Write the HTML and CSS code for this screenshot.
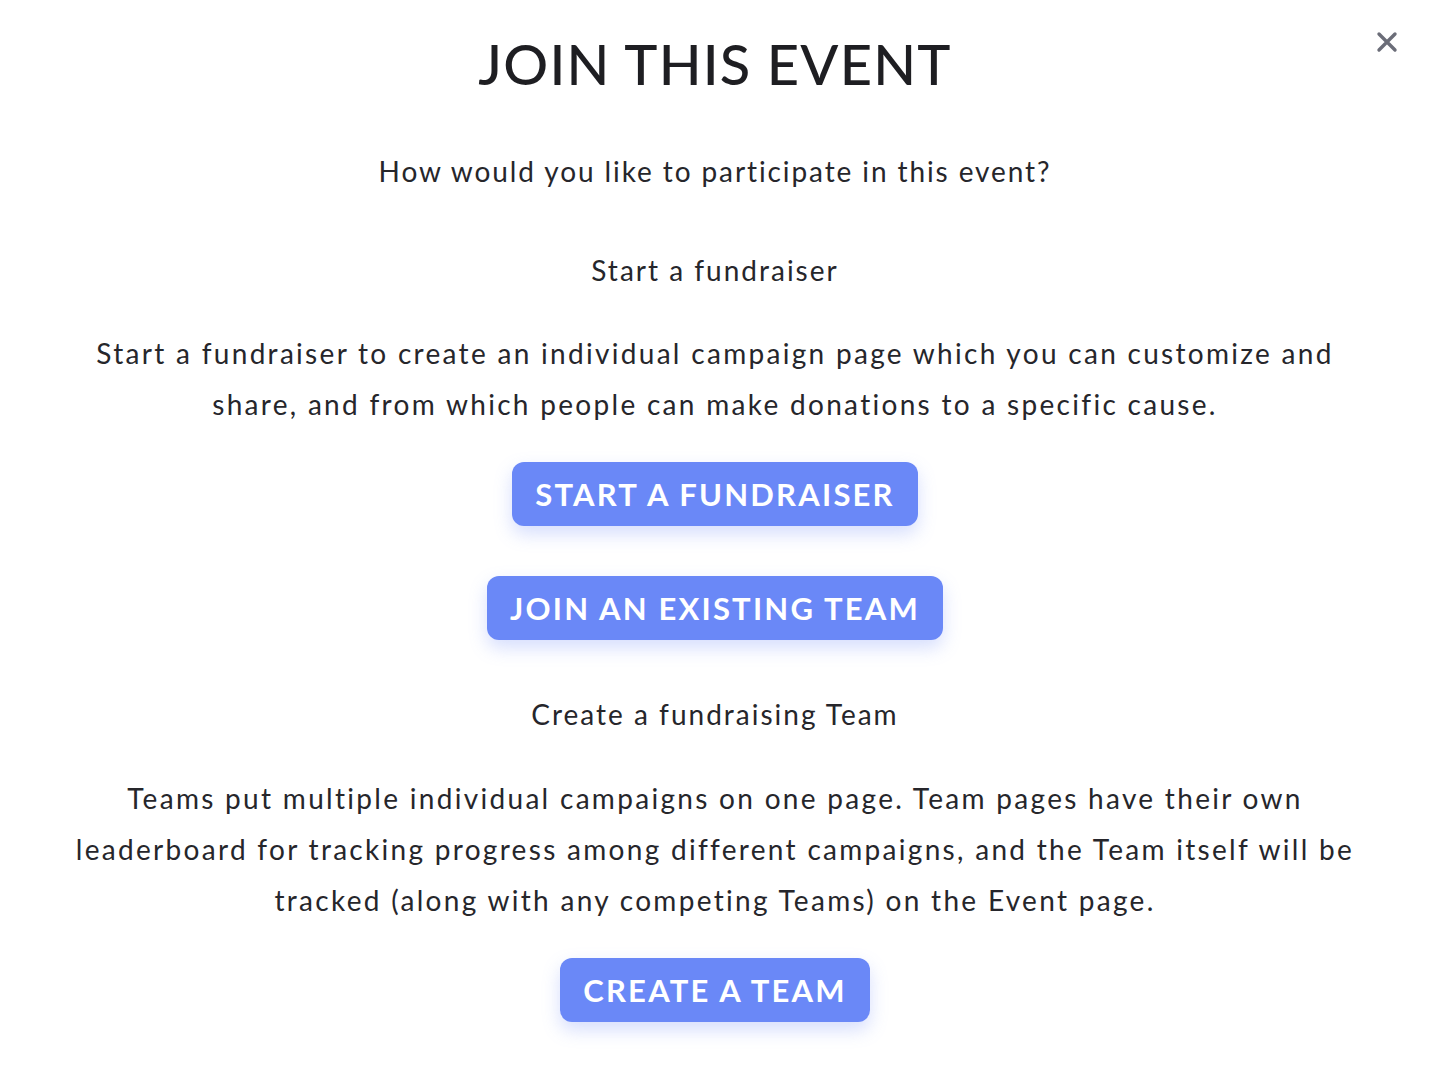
FILE: index.html
```html
<!DOCTYPE html>
<html lang="en">
<head>
<meta charset="utf-8">
<title>Join this event</title>
<link rel="stylesheet" href="styles.css">
</head>
<body>
<div class="modal">
  <button class="close" aria-label="Close">
    <svg width="22" height="22" viewBox="0 0 22 22"><path d="M3 3 L19 19 M19 3 L3 19" stroke="#6b6d78" stroke-width="3.4" stroke-linecap="round" fill="none"/></svg>
  </button>
  <h1 class="title">JOIN THIS EVENT</h1>
  <p class="question">How would you like to participate in this event?</p>
  <h2 class="heading h-first">Start a fundraiser</h2>
  <p class="para">Start a fundraiser to create an individual campaign page which you can customize and<br>share, and from which people can make donations to a specific cause.</p>
  <button class="btn btn-first">START A FUNDRAISER</button>
  <button class="btn btn-second">JOIN AN EXISTING TEAM</button>
  <h2 class="heading h-second">Create a fundraising Team</h2>
  <p class="para para-second">Teams put multiple individual campaigns on one page. Team pages have their own<br>leaderboard for tracking progress among different campaigns, and the Team itself will be<br>tracked (along with any competing Teams) on the Event page.</p>
  <button class="btn btn-first">CREATE A TEAM</button>
</div>
</body>
</html>
```

FILE: styles.css
```css
* { box-sizing: border-box; }
html, body { margin: 0; padding: 0; background: #ffffff; }
body {
  font-family: "Lato", "Open Sans", sans-serif;
  color: #26262b;
}
.modal {
  position: relative;
  width: 1430px;
  min-height: 1076px;
  padding: 24px 40px 0;
  display: flex;
  flex-direction: column;
  align-items: center;
  text-align: center;
}
.close {
  position: absolute;
  top: 31px;
  right: 32px;
  border: 0;
  background: transparent;
  padding: 0;
  width: 22px;
  height: 22px;
  cursor: pointer;
}
.close svg { display: block; }
.title {
  margin: 0;
  font-size: 56px;
  line-height: 80px;
  font-weight: 500;
  letter-spacing: 1.2px;
  color: #1e1e22;
}
.question {
  margin: 42px 0 0;
  font-size: 28px;
  line-height: 51px;
  letter-spacing: 1.9px;
}
.heading {
  margin: 0;
  font-size: 28px;
  line-height: 51px;
  font-weight: 400;
  letter-spacing: 2px;
}
.h-first { margin-top: 48px; }
.h-second { margin-top: 49px; }
.para {
  margin: 32px 0 0;
  font-size: 28px;
  line-height: 51px;
  letter-spacing: 2.3px;
  white-space: nowrap;
}
.para-second { margin-top: 33px; }
.btn {
  height: 64px;
  padding: 0 23px;
  border: 0;
  border-radius: 12px;
  background: #6a88f7;
  color: #ffffff;
  font-family: "Lato", "Open Sans", sans-serif;
  font-size: 31px;
  font-weight: 700;
  letter-spacing: 2.2px;
  box-shadow: 0 8px 18px rgba(106, 136, 247, 0.28);
  cursor: pointer;
}
.btn-first { margin-top: 32px; }
.btn-second { margin-top: 50px; }
```
